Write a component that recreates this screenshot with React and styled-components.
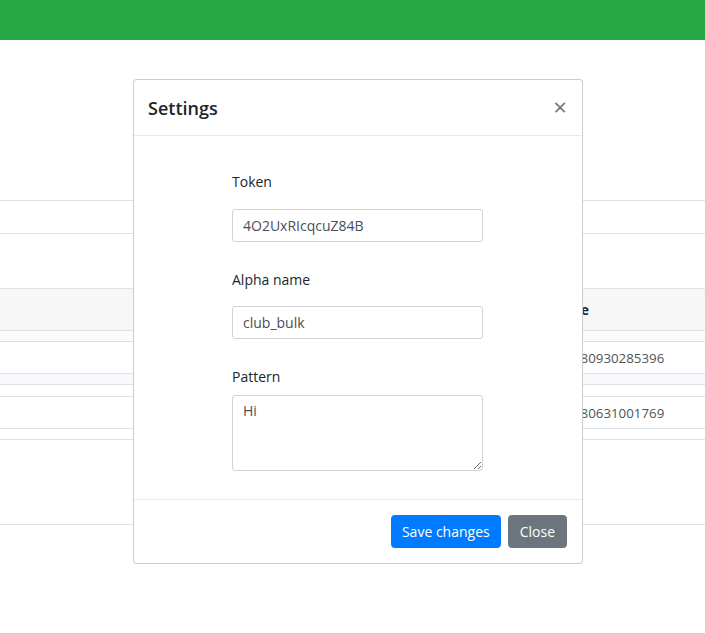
import React from "react";
import styled, { createGlobalStyle } from "styled-components";

const GlobalStyle = createGlobalStyle`
  html, body { margin: 0; padding: 0; background: #ffffff; }
  body {
    font-family: "Open Sans", "Noto Sans", Arial, sans-serif;
    font-size: 14px;
    color: #212529;
  }
  * { box-sizing: border-box; }
`;

const Page = styled.div`
  position: relative;
  width: 705px;
  height: 633px;
  overflow: hidden;
  background: #fff;
`;

const Navbar = styled.div`
  height: 40px;
  background: #28a745;
`;

const Main = styled.div`
  padding-top: 160px;
`;

const InfoBlock = styled.div`
  height: 34px;
  border-top: 1px solid #dee2e6;
  border-bottom: 1px solid #dee2e6;
`;

const Table = styled.div`
  margin-top: 54px;
  border-top: 1px solid #dee2e6;
`;

const Row = styled.div`
  display: grid;
  grid-template-columns: 545px 1fr;
  align-items: center;
  height: ${(p) => p.$h}px;
  background: ${(p) => p.$bg || "#fff"};
  border-bottom: 1px solid #dee2e6;
  font-weight: ${(p) => (p.$head ? 700 : 400)};
  font-size: ${(p) => (p.$head ? 14 : 13.3)}px;
  color: ${(p) => (p.$head ? "#212529" : "#4f5458")};
`;

const Cell = styled.div`
  padding-left: ${(p) => p.$pl || 0}px;
  white-space: nowrap;
`;

const BottomRule = styled.div`
  margin-top: 84px;
  border-top: 1px solid #dee2e6;
`;

const Modal = styled.div`
  position: absolute;
  left: 133px;
  top: 79px;
  width: 450px;
  height: 485px;
  background: #fff;
  border: 1px solid rgba(0, 0, 0, 0.2);
  border-radius: 4px;
  display: flex;
  flex-direction: column;
`;

const Header = styled.div`
  height: 56px;
  display: flex;
  align-items: center;
  justify-content: space-between;
  padding: 0 14px 0 14px;
  border-bottom: 1px solid #e9ecef;
`;

const Title = styled.h5`
  margin: 0;
  font-size: 18px;
  font-weight: 600;
  color: #212529;
`;

const CloseX = styled.button`
  border: 0;
  background: transparent;
  padding: 0 1px 2px 0;
  font-family: "Open Sans", Arial, sans-serif;
  font-size: 24px;
  font-weight: 400;
  line-height: 1;
  color: #000;
  opacity: 0.55;
  cursor: pointer;
`;

const Body = styled.div`
  flex: 1;
  display: flex;
  justify-content: flex-start;
  padding: 36px 0 0 98px;
`;

const Form = styled.div`
  width: 251px;
  display: flex;
  flex-direction: column;
`;

const Label = styled.label`
  display: block;
  line-height: 20px;
  margin-bottom: ${(p) => p.$mb}px;
  color: #212529;
`;

const Input = styled.input`
  display: block;
  width: 100%;
  height: 33px;
  padding: 0 10px;
  font: inherit;
  color: #495057;
  border: 1px solid #ced4da;
  border-radius: 3px;
  margin-bottom: 28px;
  outline: none;
`;

const TextArea = styled.textarea`
  display: block;
  width: 100%;
  height: 76px;
  padding: 5px 10px;
  font: inherit;
  color: #495057;
  border: 1px solid #ced4da;
  border-radius: 3px;
  outline: none;
`;

const Footer = styled.div`
  height: 64px;
  display: flex;
  align-items: center;
  justify-content: flex-end;
  gap: 7px;
  padding: 0 15px 0 0;
  border-top: 1px solid #e9ecef;
`;

const Button = styled.button`
  height: 33px;
  padding: 0 ${(p) => (p.$variant === "primary" ? 10 : 11)}px;
  font: inherit;
  color: #fff;
  border: 1px solid ${(p) => (p.$variant === "primary" ? "#007bff" : "#6c757d")};
  background: ${(p) => (p.$variant === "primary" ? "#007bff" : "#6c757d")};
  border-radius: 3.6px;
  cursor: pointer;
`;

export default function App() {
  return (
    <Page>
      <GlobalStyle />
      <Navbar />
      <Main>
        <InfoBlock />
        <Table>
          <Row $h={42} $bg="#f7f7f7" $head>
            <Cell />
            <Cell>Phone</Cell>
          </Row>
          <Row $h={11} $bg="#fcfcfc" />
          <Row $h={32}>
            <Cell />
            <Cell $pl={28}>380930285396</Cell>
          </Row>
          <Row $h={11} $bg="#f8f9fc" />
          <Row $h={12} />
          <Row $h={32}>
            <Cell />
            <Cell $pl={28}>380631001769</Cell>
          </Row>
          <Row $h={11} />
        </Table>
        <BottomRule />
      </Main>

      <Modal>
        <Header>
          <Title>Settings</Title>
          <CloseX aria-label="Close">×</CloseX>
        </Header>
        <Body>
          <Form>
            <Label $mb={17}>Token</Label>
            <Input defaultValue="4O2UxRIcqcuZ84B" />
            <Label $mb={16}>Alpha name</Label>
            <Input defaultValue="club_bulk" />
            <Label $mb={8}>Pattern</Label>
            <TextArea defaultValue="Hi" />
          </Form>
        </Body>
        <Footer>
          <Button $variant="primary">Save changes</Button>
          <Button $variant="secondary">Close</Button>
        </Footer>
      </Modal>
    </Page>
  );
}
